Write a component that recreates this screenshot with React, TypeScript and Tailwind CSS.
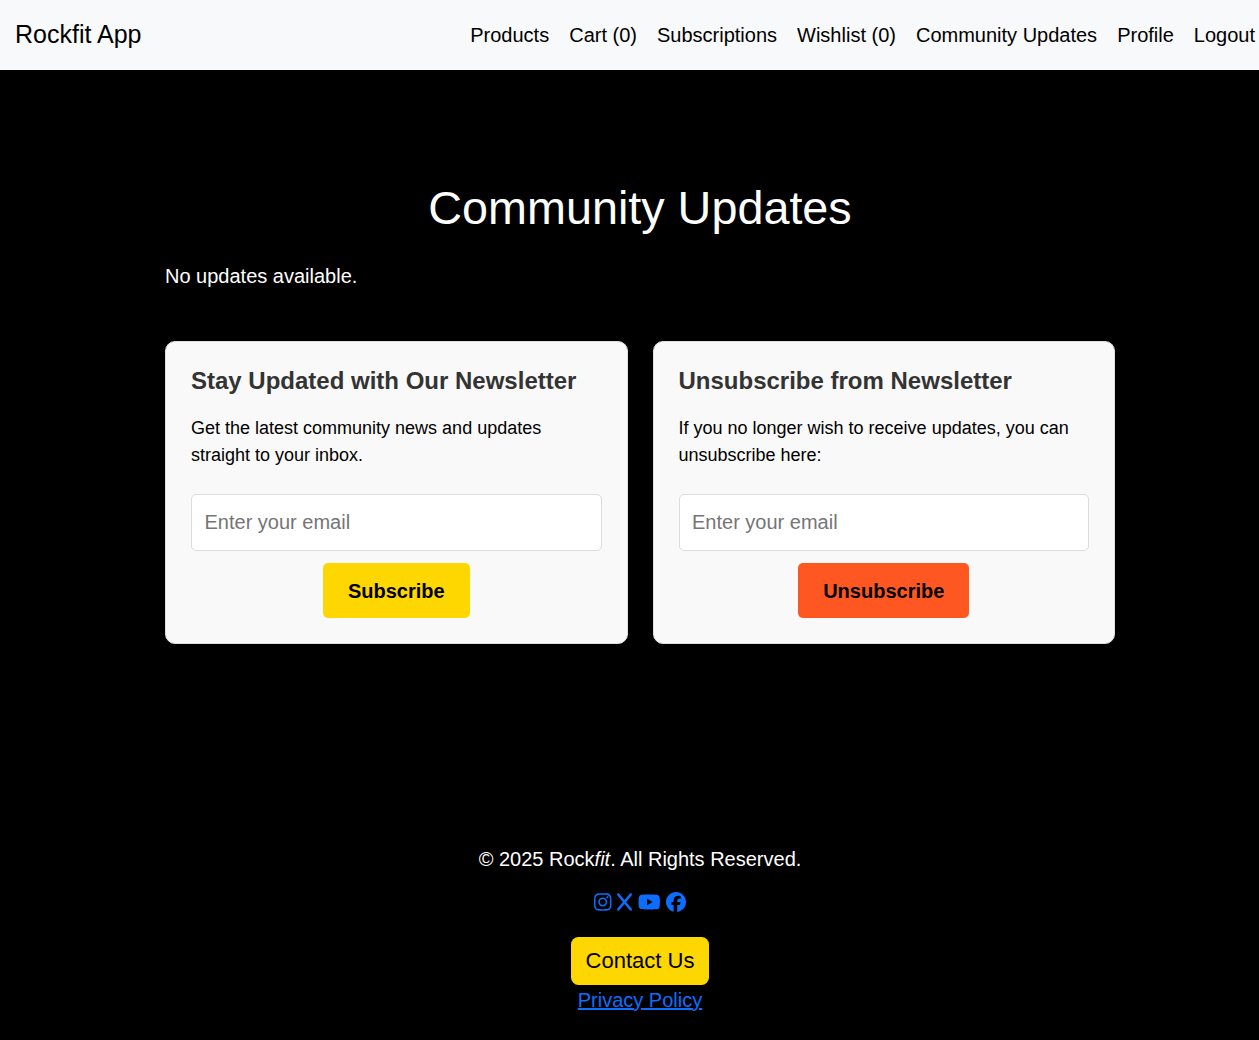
import type { ReactNode } from 'react';
import { FaInstagram, FaX, FaYoutube, FaFacebook } from 'react-icons/fa6';

const links = ['Products', 'Cart (0)', 'Subscriptions', 'Wishlist (0)', 'Community Updates', 'Profile', 'Logout'];

function Card({ title, children, action, color }: { title: string; children: ReactNode; action: string; color: string }) {
  return (
    <section className="flex h-[303px] flex-1 flex-col items-center rounded-[10px] border border-[#ddd] bg-[#f9f9f9] px-[25px] pt-[25px]">
      <h2 className="w-full text-[24px] leading-[28px] font-bold whitespace-nowrap text-[#333]">{title}</h2>
      <p className="mt-[20px] w-full text-[18px] leading-[27px] text-black">{children}</p>
      <input
        type="email"
        placeholder="Enter your email"
        className="mt-[25px] h-[57px] w-full shrink-0 rounded-[5px] border border-[#ddd] bg-white px-[12.5px] text-[20px] text-black placeholder:text-[#757575]"
      />
      <button className={`mt-3 h-[55px] shrink-0 rounded-[5px] px-[25px] text-[20px] font-bold text-black ${color}`}>{action}</button>
    </section>
  );
}

export default function App() {
  return (
    <div className="flex h-[1040px] w-[1259px] flex-col overflow-hidden bg-black font-['Liberation_Sans',Arial,sans-serif] text-[20px] text-white">
      <header className="flex h-[70px] shrink-0 items-center justify-between bg-[#f8f9fa] pr-[4px] pl-[15px] text-black">
        <span className="text-[25px]">Rockfit App</span>
        <nav className="flex gap-5 whitespace-nowrap">
          {links.map((l) => (
            <a key={l} href="#">{l}</a>
          ))}
        </nav>
      </header>
      <main className="ml-[165px] w-[950px] shrink-0">
        <h1 className="mt-[110px] text-center text-[46.75px] leading-[56px]">Community Updates</h1>
        <p className="mt-[25px] leading-[30px]">No updates available.</p>
        <div className="mt-[50px] flex gap-[25px]">
          <Card title="Stay Updated with Our Newsletter" action="Subscribe" color="bg-[#ffd700]">
            Get the latest community news and updates straight to your inbox.
          </Card>
          <Card title="Unsubscribe from Newsletter" action="Unsubscribe" color="bg-[#ff5722]">
            If you no longer wish to receive updates, you can unsubscribe here:
          </Card>
        </div>
      </main>
      <footer className="mt-[200px] flex w-[1280px] shrink-0 flex-col items-center">
        <p className="leading-[30px]">
          © 2025 Rock<em>fit</em>. All Rights Reserved.
        </p>
        <div className="mt-[17.5px] flex h-5 items-center gap-[5.5px] text-[#0d6efd]">
          <FaInstagram className="h-5 w-[17.5px]" />
          <FaX className="h-5 w-[15px]" />
          <FaYoutube className="h-5 w-[22.5px]" />
          <FaFacebook className="h-5 w-5" />
        </div>
        <button className="mt-[25.5px] h-[48px] rounded-[7.5px] bg-[#ffd700] px-[15px] pb-[2px] text-[22px] text-black">Contact Us</button>
        <a href="#" className="leading-[30px] text-[#0d6efd] underline">Privacy Policy</a>
      </footer>
    </div>
  );
}
